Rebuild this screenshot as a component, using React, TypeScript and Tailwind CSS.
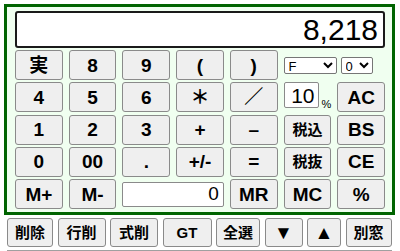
import React from 'react';

const font = { fontFamily: '"Liberation Sans", "Noto Sans CJK JP", sans-serif' };

function Key({ label, small }: { label: string; small?: boolean }) {
  return (
    <button
      className={`h-full w-full rounded-[3px] border border-[#8a8a8a] bg-[#efefef] font-bold text-black leading-none ${
        small ? 'text-[15px]' : 'text-[19px]'
      }`}
    >
      {label}
    </button>
  );
}

function ToolKey({ label, w, big }: { label: string; w: string; big?: boolean }) {
  return (
    <button
      className={`h-[29px] ${w} rounded-[3px] border border-[#8a8a8a] bg-[#efefef] font-bold text-black leading-none ${
        big ? 'text-[19px]' : 'text-[15px]'
      }`}
    >
      {label}
    </button>
  );
}

export default function App() {
  return (
    <div className="min-h-[251px] bg-white p-[4px] pb-0" style={font}>
      <div className="w-[391px] border-[3px] border-[#006400] bg-[#f0fff0] pb-[3px] pl-[8px] pr-[7px] pt-[4px]">
        {/* Display */}
        <div className="flex h-[37px] items-center justify-end rounded-[3px] border-2 border-[#1a1a1a] bg-white pr-[5px] text-[30px] text-black">
          8,218
        </div>

        {/* Keys */}
        <div className="mt-[2px] grid grid-cols-7 auto-rows-[30px] gap-x-[6px] gap-y-[2.25px]">
          <Key label="実" />
          <Key label="8" />
          <Key label="9" />
          <Key label="(" />
          <Key label=")" />
          <div className="col-span-2 flex items-center gap-[4px]">
            <select className="h-[17px] w-[53px] rounded-[2px] border border-[#767676] bg-white text-[13px]" defaultValue="F">
              <option>F</option>
            </select>
            <select className="h-[17px] w-[32px] rounded-[2px] border border-[#767676] bg-white text-[13px]" defaultValue="0">
              <option>0</option>
            </select>
          </div>

          <Key label="4" />
          <Key label="5" />
          <Key label="6" />
          <Key label="＊" />
          <Key label="／" />
          <div className="flex items-start">
            <div className="flex h-[26px] w-[35px] items-center justify-end rounded-[2px] border border-[#8a8a8a] bg-white pr-[3px] text-[21px]">
              10
            </div>
            <span className="ml-[3px] self-end pb-[2px] text-[11px] leading-none">%</span>
          </div>
          <Key label="AC" />

          <Key label="1" />
          <Key label="2" />
          <Key label="3" />
          <Key label="+" />
          <Key label="–" />
          <Key label="税込" small />
          <Key label="BS" />

          <Key label="0" />
          <Key label="00" />
          <Key label="." />
          <Key label="+/-" />
          <Key label="=" />
          <Key label="税抜" small />
          <Key label="CE" />

          <Key label="M+" />
          <Key label="M-" />
          <div className="col-span-2 flex items-center">
            <div className="flex h-[25px] w-full items-center justify-end rounded-[2px] border border-[#8a8a8a] bg-white pr-[4px] text-[19px]">
              0
            </div>
          </div>
          <Key label="MR" />
          <Key label="MC" />
          <Key label="%" />
        </div>
      </div>

      {/* Toolbar */}
      <div className="mt-[3px] flex gap-[4.5px] pl-[3px]">
        <ToolKey label="削除" w="w-[46px]" />
        <ToolKey label="行削" w="w-[48px]" />
        <ToolKey label="式削" w="w-[48px]" />
        <ToolKey label="GT" w="w-[49px]" />
        <ToolKey label="全選" w="w-[44px]" />
        <ToolKey label="▼" w="w-[38px]" big />
        <ToolKey label="▲" w="w-[34px]" big />
        <ToolKey label="別窓" w="w-[46px]" />
      </div>
      <div className="ml-[3px] mt-[3px] h-px w-[385px] bg-[#a0a0a0]" />
    </div>
  );
}
